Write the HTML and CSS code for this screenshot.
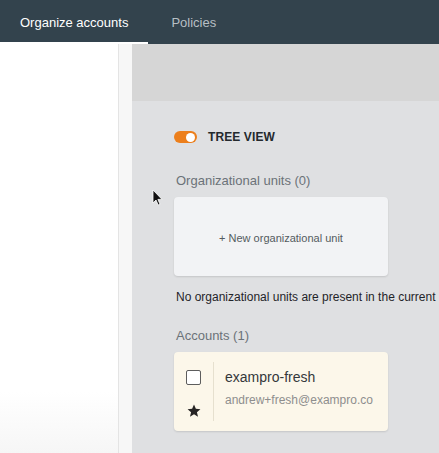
FILE: index.html
```html
<!DOCTYPE html>
<html>
<head>
<meta charset="utf-8">
<link rel="stylesheet" href="styles.css">
</head>
<body>
<div class="topbar">
  <div class="tab tab-active">Organize accounts</div>
  <div class="tab tab-second">Policies</div>
</div>
<div class="content">
  <div class="sidebar"></div>
  <div class="strip"></div>
  <div class="main">
    <div class="main-header"></div>
    <div class="main-body">
      <div class="toggle-row">
        <span class="toggle"><span class="knob"></span></span>
        <span class="toggle-label">TREE VIEW</span>
      </div>
      <div class="section-title ou-title">Organizational units (0)</div>
      <div class="card new-ou">+ New organizational unit</div>
      <div class="note">No organizational units are present in the current</div>
      <div class="section-title acc-title">Accounts (1)</div>
      <div class="card account">
        <div class="acc-left">
          <span class="checkbox"></span>
          <svg class="star" width="14" height="14" viewBox="0 0 24 24"><path d="M12 1l3.2 7.3 7.8.6-6 5.1 1.9 7.7L12 17.6 5.1 21.7 7 14 1 8.9l7.8-.6z" fill="#262424"/></svg>
        </div>
        <div class="acc-right">
          <div class="acc-name">exampro-fresh</div>
          <div class="acc-email">andrew+fresh@exampro.co</div>
        </div>
      </div>
    </div>
  </div>
</div>
<svg class="cursor" width="11" height="17" viewBox="0 0 11 17"><path d="M1 1v13l3-3 2.2 5 1.8-.8-2.1-4.8H10z" fill="#111" stroke="#fff" stroke-width="0.8"/></svg>
</body>
</html>
```

FILE: styles.css
```css
html, body {
  margin: 0;
  padding: 0;
  width: 439px;
  height: 453px;
  overflow: hidden;
  font-family: "Liberation Sans", Arial, sans-serif;
  background: #dfe0e2;
}
.topbar {
  height: 44px;
  background: #33434d;
  display: flex;
  align-items: stretch;
}
.tab {
  padding: 0 20px;
  display: flex;
  align-items: center;
  font-size: 13px;
  color: #b7bfc4;
  box-sizing: border-box;
  border-bottom: 2px solid transparent;
  padding-top: 2px;
}
.tab-active {
  color: #ffffff;
  border-bottom-color: #ffffff;
}
.tab-second {
  margin-left: 3px;
}
.content {
  display: flex;
  height: 409px;
}
.sidebar {
  width: 118px;
  background: linear-gradient(#ffffff 85%, #f6f6f6);
  border-right: 1px solid #e4e4e4;
}
.strip {
  width: 13px;
  background: #f7f7f7;
}
.main {
  flex: 1;
  background: #dfe0e2;
  overflow: hidden;
}
.main-header {
  height: 57px;
  background: #d6d6d6;
}
.main-body {
  padding-left: 42px;
  padding-top: 29px;
  white-space: nowrap;
}
.toggle-row {
  display: flex;
  align-items: center;
  height: 14px;
}
.toggle {
  width: 23px;
  height: 12px;
  border-radius: 6px;
  background: #ec7f1c;
  position: relative;
  display: inline-block;
}
.knob {
  position: absolute;
  right: 2px;
  top: 1.5px;
  width: 9px;
  height: 9px;
  border-radius: 50%;
  background: #ffffff;
}
.toggle-label {
  margin-left: 11px;
  font-size: 12px;
  font-weight: bold;
  color: #24292d;
  letter-spacing: 0.1px;
}
.section-title {
  font-size: 13px;
  line-height: 16px;
  color: #6b7278;
  padding-left: 2px;
}
.ou-title {
  margin-top: 29px;
}
.card {
  width: 214px;
  height: 79px;
  border-radius: 4px;
  box-sizing: border-box;
  box-shadow: 0 1px 2px rgba(0,0,0,0.12);
}
.new-ou {
  margin-top: 8px;
  background: #f2f3f5;
  display: flex;
  align-items: center;
  justify-content: center;
  font-size: 11px;
  color: #545b60;
  padding-top: 2px;
}
.note {
  margin-top: 14px;
  font-size: 12px;
  line-height: 14px;
  color: #1f2429;
  padding-left: 2px;
}
.acc-title {
  margin-top: 24px;
}
.account {
  margin-top: 8px;
  background: #fcf7ea;
  display: flex;
  padding: 10px 0;
}
.acc-left {
  width: 39px;
  border-right: 1px solid #e6e0cf;
  display: flex;
  flex-direction: column;
  align-items: center;
  padding-top: 8px;
}
.checkbox {
  width: 15px;
  height: 15px;
  box-sizing: border-box;
  border: 1.5px solid #5d5d5d;
  border-radius: 2px;
  background: #ffffff;
  display: block;
}
.star {
  margin-top: 19px;
  display: block;
}
.acc-right {
  padding-left: 11px;
  padding-top: 6px;
}
.acc-name {
  font-size: 14px;
  line-height: 18px;
  color: #34383b;
}
.acc-email {
  margin-top: 7px;
  font-size: 12px;
  line-height: 14px;
  color: #8e8e8e;
}
.cursor {
  position: absolute;
  left: 152px;
  top: 189px;
}
```
